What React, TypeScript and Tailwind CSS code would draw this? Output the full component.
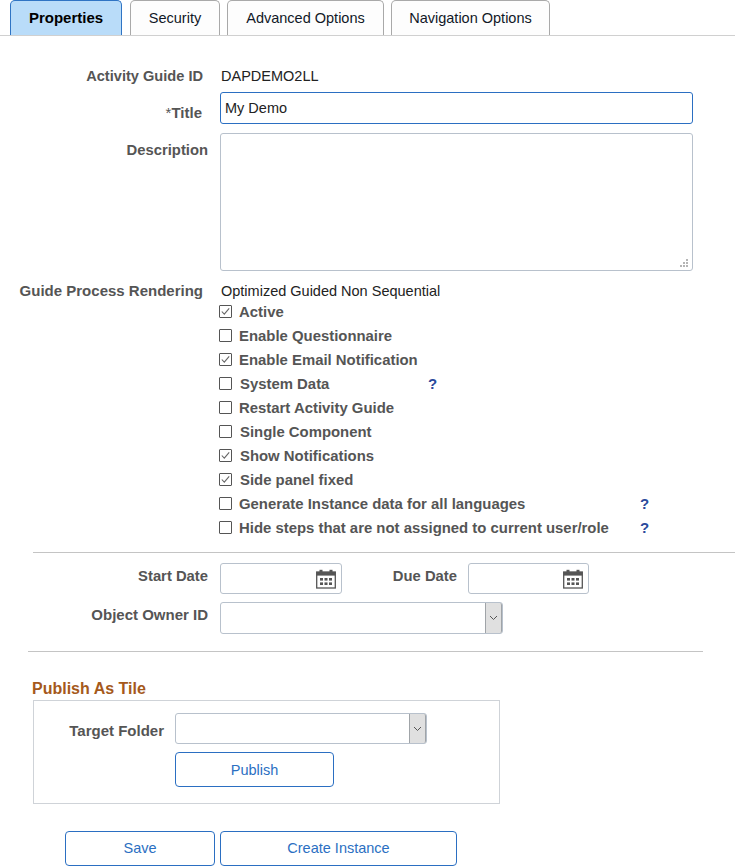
import React from "react";

const Tab = ({ label, active, className }: { label: string; active?: boolean; className: string }) => (
  <div
    className={
      "h-[35px] flex items-center justify-center rounded-t-[5px] border border-b-0 " +
      (active
        ? "bg-[#b9dcf9] border-[#2f74c4] font-bold text-black text-[15px] "
        : "bg-[#fdfdfd] border-[#a9a9a9] text-[#111827] text-[14.5px] ") +
      className
    }
  >
    {label}
  </div>
);

const Check = ({ checked }: { checked?: boolean }) => (
  <svg width="13" height="13" viewBox="0 0 13 13" className="shrink-0 -mt-[1px]">
    <rect x="0.5" y="0.5" width="12" height="12" rx="0.5" fill="#fff" stroke="#555" />
    {checked && <path d="M2.8 6.5 L5.3 9.2 L10.2 3.4" fill="none" stroke="#666" strokeWidth="1.1" />}
  </svg>
);

const Help = () => <span className="font-bold text-[15px] text-[#2a4a9b]">?</span>;

const CheckRow = ({
  label,
  checked,
  help,
  shift,
}: {
  label: string;
  checked?: boolean;
  help?: string;
  shift?: boolean;
}) => (
  <div className="h-[24px] flex items-center relative ml-[219px]">
    <Check checked={checked} />
    <span className={"font-bold text-[14.9px] text-[#555] " + (shift ? "ml-[8px]" : "ml-[7px]")}>{label}</span>
    {help === "a" && <span className="absolute left-[209px]"><Help /></span>}
    {help === "b" && <span className="absolute left-[421px]"><Help /></span>}
  </div>
);

const Calendar = () => (
  <svg width="20" height="20" viewBox="0 0 20 20">
    <rect x="0.7" y="3" width="18.6" height="16" fill="none" stroke="#555" strokeWidth="1.3" />
    <rect x="0.5" y="3" width="19" height="3.6" fill="#555" />
    <rect x="3.5" y="0.8" width="3" height="3.5" fill="#555" />
    <rect x="13.5" y="0.8" width="3" height="3.5" fill="#555" />
    <rect x="4" y="9" width="3" height="2.6" fill="#555" />
    <rect x="8.5" y="9" width="3" height="2.6" fill="#555" />
    <rect x="13" y="9" width="3" height="2.6" fill="#555" />
    <rect x="4" y="13.4" width="3" height="2.6" fill="#555" />
    <rect x="8.5" y="13.4" width="3" height="2.6" fill="#555" />
    <rect x="13" y="13.4" width="3" height="2.6" fill="#555" />
  </svg>
);

const DateBox = ({ className }: { className: string }) => (
  <div className={"h-[31px] border border-[#b8c1cc] rounded-[3px] bg-white flex items-center justify-end pr-[5px] " + className}>
    <Calendar />
  </div>
);

const Select = ({ className }: { className: string }) => (
  <div className={"border border-[#b8c1cc] rounded-[3px] bg-white flex justify-end " + className}>
    <div className="w-[17px] bg-[#e0e0e0] border-l border-r border-[#a0a4a8] flex items-center justify-center rounded-r-[2px]">
      <svg width="9" height="6" viewBox="0 0 9 6">
        <path d="M1 1 L4.5 4.5 L8 1" fill="none" stroke="#555" strokeWidth="1" />
      </svg>
    </div>
  </div>
);

const Btn = ({ label, className }: { label: string; className: string }) => (
  <div className={"h-[35px] border border-[#2b6fc2] rounded-[4px] bg-white text-[#2b6fc2] text-[14.5px] flex items-center justify-center " + className}>
    {label}
  </div>
);

const Label = ({ children, className }: { children: React.ReactNode; className: string }) => (
  <div className={"font-bold text-[#555] text-right shrink-0 whitespace-nowrap " + className}>{children}</div>
);

export default function App() {
  return (
    <div className="w-[735px] h-[866px] overflow-hidden bg-white font-['Liberation_Sans',Arial,sans-serif] leading-[16px]">
      <div className="h-[36px] border-b border-[#d0d0d0] flex items-end pl-[10px]">
        <Tab label="Properties" active className="w-[112px]" />
        <Tab label="Security" className="w-[90px] ml-[8px]" />
        <Tab label="Advanced Options" className="w-[157px] ml-[7px]" />
        <Tab label="Navigation Options" className="w-[159px] ml-[7px]" />
      </div>

      <div className="flex items-center h-[16px] mt-[32px]">
        <Label className="w-[203px] text-[14.6px]">Activity Guide ID</Label>
        <div className="ml-[18px] text-[14.5px] text-[#222]">DAPDEMO2LL</div>
      </div>

      <div className="flex mt-[8px]">
        <Label className="w-[202px] mt-[13px] text-[15px]"><span className="font-normal">*</span>Title</Label>
        <div className="ml-[18px] w-[473px] h-[32px] border border-[#2b6fc2] rounded-[3px] flex items-center pl-[4px] text-[14.5px] text-[#222]">
          My Demo
        </div>
      </div>

      <div className="flex mt-[9px]">
        <Label className="w-[208px] mt-[9px] text-[14.8px]">Description</Label>
        <div className="ml-[12px] w-[473px] h-[138px] border border-[#b8c1cc] rounded-[3px] relative">
          <svg width="9" height="9" viewBox="0 0 9 9" className="absolute right-[3px] bottom-[2px]">
            <g fill="#b5b5b5">
              <rect x="6" y="0" width="2" height="2" />
              <rect x="3" y="3" width="2" height="2" />
              <rect x="6" y="3" width="2" height="2" />
              <rect x="0" y="6" width="2" height="2" />
              <rect x="3" y="6" width="2" height="2" />
              <rect x="6" y="6" width="2" height="2" />
            </g>
          </svg>
        </div>
      </div>

      <div className="flex items-center h-[16px] mt-[12px]">
        <Label className="w-[203px] text-[15px]">Guide Process Rendering</Label>
        <div className="ml-[18px] text-[14.5px] text-[#222]">Optimized Guided Non Sequential</div>
      </div>

      <div className="mt-[1px]">
        <CheckRow label="Active" checked />
        <CheckRow label="Enable Questionnaire" />
        <CheckRow label="Enable Email Notification" checked />
        <CheckRow label="System Data" help="a" shift />
        <CheckRow label="Restart Activity Guide" />
        <CheckRow label="Single Component" shift />
        <CheckRow label="Show Notifications" checked shift />
        <CheckRow label="Side panel fixed" checked shift />
        <CheckRow label="Generate Instance data for all languages" help="b" />
        <CheckRow label="Hide steps that are not assigned to current user/role" help="b" />
      </div>

      <div className="h-px bg-[#c4c4c4] ml-[33px] mt-[12px]" />

      <div className="flex items-center mt-[10px]">
        <Label className="w-[208px] -mt-[5px] text-[14.8px]">Start Date</Label>
        <DateBox className="ml-[12px] w-[122px]" />
        <Label className="ml-[49px] w-[66px] -mt-[5px] text-[14.8px]">Due Date</Label>
        <DateBox className="ml-[11px] w-[121px]" />
      </div>

      <div className="flex items-center mt-[8px]">
        <Label className="w-[208px] -mt-[6px] text-[15px]">Object Owner ID</Label>
        <Select className="ml-[12px] w-[283px] h-[32px]" />
      </div>

      <div className="h-px bg-[#c4c4c4] ml-[28px] w-[675px] mt-[17px]" />

      <div className="ml-[32px] mt-[29px] font-bold text-[16px] text-[#a5591b]">Publish As Tile</div>

      <div className="ml-[33px] mt-[3px] w-[467px] h-[104px] border border-[#cfd3d8] pt-[12px] box-border">
        <div className="flex items-center">
          <Label className="w-[130px] mt-[5px] text-[15px]">Target Folder</Label>
          <Select className="ml-[11px] w-[252px] h-[31px]" />
        </div>
        <Btn label="Publish" className="ml-[141px] mt-[8px] w-[159px]" />
      </div>

      <div className="flex ml-[65px] mt-[27px]">
        <Btn label="Save" className="w-[150px] pb-[2px]" />
        <Btn label="Create Instance" className="ml-[5px] w-[237px] pb-[2px]" />
      </div>
    </div>
  );
}
